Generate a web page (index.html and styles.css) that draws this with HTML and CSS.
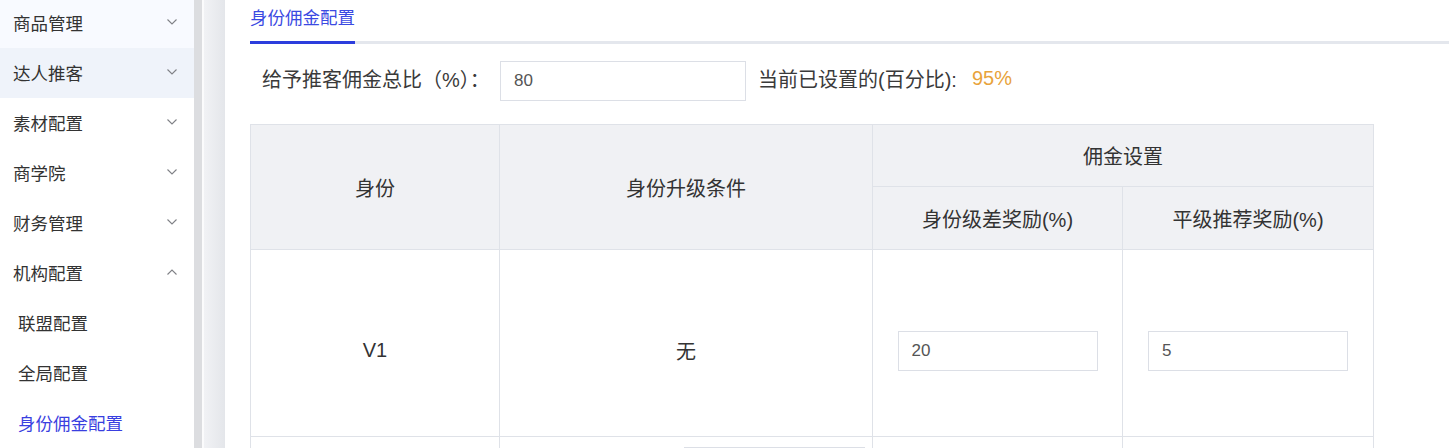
FILE: index.html
```html
<!DOCTYPE html>
<html lang="zh-CN">
<head>
<meta charset="utf-8">
<title>身份佣金配置</title>
<link rel="stylesheet" href="styles.css">
</head>
<body>
<div class="app">
  <aside class="sidebar">
    <ul class="menu">
      <li class="menu-item tint-1"><span>商品管理</span><svg class="chev" viewBox="0 0 10 6"><polyline points="0.5,0.5 5,5 9.5,0.5"/></svg></li>
      <li class="menu-item tint-2"><span>达人推客</span><svg class="chev" viewBox="0 0 10 6"><polyline points="0.5,0.5 5,5 9.5,0.5"/></svg></li>
      <li class="menu-item"><span>素材配置</span><svg class="chev" viewBox="0 0 10 6"><polyline points="0.5,0.5 5,5 9.5,0.5"/></svg></li>
      <li class="menu-item"><span>商学院</span><svg class="chev" viewBox="0 0 10 6"><polyline points="0.5,0.5 5,5 9.5,0.5"/></svg></li>
      <li class="menu-item"><span>财务管理</span><svg class="chev" viewBox="0 0 10 6"><polyline points="0.5,0.5 5,5 9.5,0.5"/></svg></li>
      <li class="menu-item"><span>机构配置</span><svg class="chev" viewBox="0 0 10 6"><polyline points="0.5,5.5 5,1 9.5,5.5"/></svg></li>
      <li class="menu-item sub"><span>联盟配置</span></li>
      <li class="menu-item sub"><span>全局配置</span></li>
      <li class="menu-item sub active"><span>身份佣金配置</span></li>
    </ul>
  </aside>
  <div class="scrollbar"></div>
  <div class="gutter"></div>
  <main class="content">
    <div class="tabs">
      <div class="tab active">身份佣金配置</div>
    </div>
    <div class="form-row">
      <label class="form-label">给予推客佣金总比（%）：</label>
      <input class="field field-total" type="text" value="80">
      <span class="summary-label">当前已设置的(百分比):</span>
      <span class="summary-value">95%</span>
    </div>
    <table class="grid">
      <colgroup>
        <col class="c1"><col class="c2"><col class="c3"><col class="c4">
      </colgroup>
      <thead>
        <tr class="h1">
          <th rowspan="2">身份</th>
          <th rowspan="2">身份升级条件</th>
          <th colspan="2">佣金设置</th>
        </tr>
        <tr class="h2">
          <th>身份级差奖励(%)</th>
          <th>平级推荐奖励(%)</th>
        </tr>
      </thead>
      <tbody>
        <tr class="row">
          <td>V1</td>
          <td>无</td>
          <td><input class="field field-cell" type="text" value="20"></td>
          <td><input class="field field-cell" type="text" value="5"></td>
        </tr>
        <tr class="row next">
          <td></td>
          <td class="cond"><input class="field field-cond" type="text" value=""></td>
          <td></td>
          <td></td>
        </tr>
      </tbody>
    </table>
  </main>
</div>
</body>
</html>
```
FILE: styles.css
```css
* { box-sizing: border-box; }
html, body {
  margin: 0;
  padding: 0;
  height: 448px;
  overflow: hidden;
  background: #fff;
  font-family: "Liberation Sans", "Noto Sans CJK SC", sans-serif;
  color: #333;
}
.app {
  display: flex;
  height: 448px;
}
.sidebar {
  width: 194px;
  flex: none;
  background: #fff;
  overflow: hidden;
}
.menu {
  list-style: none;
  margin: -2px 0 0 0;
  padding: 0;
}
.menu-item {
  height: 50px;
  display: flex;
  align-items: center;
  justify-content: space-between;
  padding: 0 17px 2px 13px;
  font-size: 17.5px;
  color: #333;
}
.menu-item.tint-1 { background: #f8faff; }
.menu-item.tint-2 { background: #eff3fa; }
.menu-item.sub { padding-left: 18px; }
.menu-item.active { color: #3a3fe0; }
.chev {
  width: 10px;
  height: 6px;
  fill: none;
  stroke: #7f8186;
  stroke-width: 1.1;
}
.scrollbar {
  width: 8px;
  flex: none;
  background: #dcdde0;
}
.gutter {
  width: 23px;
  flex: none;
  border-left: 2px solid #fbfbfc;
  background: linear-gradient(to right, #f1f2f5, #e4e6ea);
}
.content {
  flex: 1;
  padding-left: 25px;
  min-width: 0;
}
.tabs {
  height: 44px;
  border-bottom: 3px solid #e4e7ed;
  display: flex;
}
.tab {
  height: 44px;
  line-height: 36px;
  font-size: 17.5px;
  margin-bottom: -3px;
}
.tab.active {
  color: #3b4ae2;
  border-bottom: 3px solid #2c3ddd;
}
.form-row {
  display: flex;
  align-items: center;
  margin-top: 17px;
  height: 40px;
  padding-left: 12px;
}
.form-label {
  font-size: 20px;
  color: #3a3a3a;
  width: 238px;
  flex: none;
  white-space: nowrap;
  padding-bottom: 5px;
}
.field {
  border: 1px solid #dcdfe6;
  background: #fff;
  height: 40px;
  font-family: "Liberation Sans", sans-serif;
  font-size: 17px;
  color: #555;
  padding: 0 13px;
  outline: none;
  border-radius: 0;
}
.field-total { width: 246px; }
.summary-label {
  margin-left: 12px;
  font-size: 20px;
  color: #3a3a3a;
  padding-bottom: 5px;
}
.summary-value {
  margin-left: 15px;
  font-size: 20px;
  color: #e8a33b;
  padding-bottom: 5px;
}
.grid {
  margin-top: 23px;
  border-collapse: collapse;
  table-layout: fixed;
  width: 1123px;
}
.c1 { width: 249px; }
.c2 { width: 373px; }
.c3 { width: 250px; }
.c4 { width: 251px; }
.grid th, .grid td {
  border: 1px solid #dfe2e8;
  text-align: center;
  vertical-align: middle;
  padding: 0;
  font-size: 20px;
  font-weight: normal;
  color: #333;
}
.grid th { background: #f0f1f4; }
.h1 { height: 62px; }
.h2 { height: 63px; }
.row { height: 187px; }
.row td { padding-top: 15px; }
.field-cell {
  width: 200px;
  height: 40px;
}
.row.next td { vertical-align: top; height: 60px; padding-top: 0; }
.row.next td.cond { text-align: right; padding: 10px 7px 0 0; }
.field-cond { width: 181px; }
```
